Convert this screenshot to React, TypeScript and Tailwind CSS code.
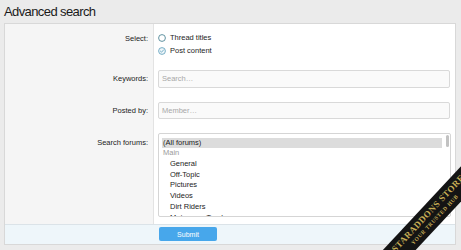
import React from 'react';

// Radio marker, plain or checked
const Radio = ({ checked }: { checked?: boolean }) => (
  <svg width="8" height="8" viewBox="0 0 8 8" className="mr-[4px] shrink-0">
    {checked ? (
      <>
        <circle cx="4" cy="4" r="3.4" fill="#eef6fa" stroke="#6aa6c0" strokeWidth="0.9" />
        <path d="M2.4 4.1l1.1 1.1 2.1-2.3" fill="none" stroke="#6aa6c0" strokeWidth="0.9" strokeLinecap="round" strokeLinejoin="round" />
      </>
    ) : (
      <circle cx="4" cy="4" r="3.4" fill="#fff" stroke="#4f8796" strokeWidth="0.9" />
    )}
  </svg>
);

const forums = [
  { name: '(All forums)', selected: true },
  { name: 'Main', group: true },
  { name: 'General', indent: true },
  { name: 'Off-Topic', indent: true },
  { name: 'Pictures', indent: true },
  { name: 'Videos', indent: true },
  { name: 'Dirt Riders', indent: true },
  { name: 'Motocross Tracks', indent: true },
];

export default function App() {
  return (
    <div className="relative w-[461px] h-[250px] overflow-hidden bg-[#ebebeb] font-['Liberation_Sans',Arial,sans-serif] text-[#1c1c1c]">
      <h1 className="h-[23px] pl-[4px] text-[13px] leading-[24px] tracking-[-0.6px] text-[#1a1a1a]">Advanced search</h1>

      <div className="ml-[4px] mr-[5px] border border-[#d8d8d8] bg-white">
        <div className="grid grid-cols-[149px_1fr] text-[7.5px]">
          {/* Select */}
          <div className="bg-[#f5f5f5] border-r border-[#e3e3e3] pr-[5px] pt-[7.5px] text-right leading-[13px]">Select:</div>
          <div className="pl-[4px] pr-[5px] pt-[7.5px]">
            <div className="flex h-[13px] items-center">
              <Radio />
              <span>Thread titles</span>
            </div>
            <div className="flex h-[13px] items-center">
              <Radio checked />
              <span>Post content</span>
            </div>
          </div>

          {/* Keywords */}
          <div className="bg-[#f5f5f5] border-r border-[#e3e3e3] pr-[5px] pt-[12.5px] text-right leading-[18px]">Keywords:</div>
          <div className="pl-[4px] pr-[5px] pt-[12.5px]">
            <div className="flex h-[18px] items-center rounded-[2px] border border-[#d9d9d9] bg-[#fafafa] pl-[3px] text-[#a8a8a8]">Search…</div>
          </div>

          {/* Posted by */}
          <div className="bg-[#f5f5f5] border-r border-[#e3e3e3] pr-[5px] pt-[14px] text-right leading-[17px]">Posted by:</div>
          <div className="pl-[4px] pr-[5px] pt-[14px]">
            <div className="flex h-[17px] items-center rounded-[2px] border border-[#d9d9d9] bg-[#fafafa] pl-[3px] text-[#a8a8a8]">Member…</div>
          </div>

          {/* Search forums */}
          <div className="bg-[#f5f5f5] border-r border-[#e3e3e3] pr-[5px] pt-[18.7px] text-right leading-[10.7px]">Search forums:</div>
          <div className="pl-[4px] pr-[4px] pt-[14px] pb-[7px]">
            <div className="relative h-[84px] overflow-hidden rounded-[2px] border border-[#d5d5d5] bg-white pl-[3px] pr-[8px] pt-[3.7px]">
              {forums.map((f) => (
                <div
                  key={f.name}
                  className={`h-[10.7px] leading-[10.7px] ${f.selected ? 'bg-[#dcdcdc] pl-[1px]' : ''} ${f.group ? 'pl-[1px] text-[#9a9a9a]' : ''} ${f.indent ? 'pl-[8px]' : ''}`}
                >
                  {f.name}
                </div>
              ))}
              <div className="absolute right-[1px] top-[1px] h-[12px] w-[3px] rounded-full bg-[#c2c2c2]" />
            </div>
          </div>
        </div>

        {/* Footer */}
        <div className="grid grid-cols-[149px_1fr] border-t border-[#dbe3e8] bg-[#eef6fa] pt-[2px] pb-[3px]">
          <div />
          <div className="flex pl-[5px]">
            <button className="flex h-[14px] w-[58px] items-center justify-center rounded-[2px] bg-[#47a7eb] text-[7px] leading-none text-white">Submit</button>
          </div>
        </div>
      </div>

      {/* watermark ribbon */}
      <div className="pointer-events-none absolute left-[356px] top-[204px] flex h-[24px] w-[150px] -rotate-[47deg] flex-col items-center justify-center bg-[#141414] font-['Liberation_Serif',serif] font-bold leading-none text-[#c6ad55]">
        <span className="text-[9px] tracking-[0.5px]">STARADDONS STORE</span>
        <span className="mt-[2px] text-[5.5px] tracking-[0.6px]">YOUR TRUSTED HUB</span>
      </div>
    </div>
  );
}
